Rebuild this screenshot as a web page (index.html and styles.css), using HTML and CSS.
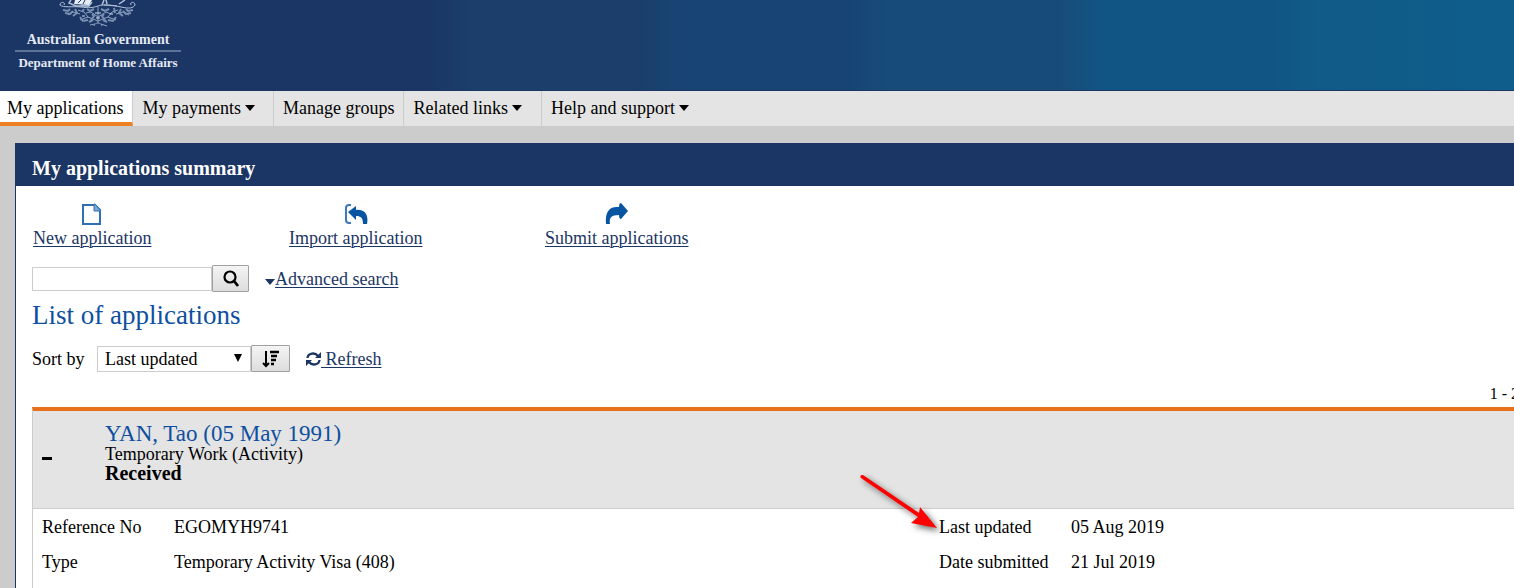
FILE: index.html
```html
<!DOCTYPE html>
<html lang="en">
<head>
<meta charset="utf-8">
<title>My applications summary</title>
<link rel="stylesheet" href="styles.css">
</head>
<body>
<header class="banner">
  <div class="brand">
    <svg class="crest" width="80" height="27" viewBox="0 0 80 27" fill="none" stroke="#b4c3d9" stroke-width="1" aria-hidden="true">
      <path d="M13 0 11 3 18 6H31L34 2M31 0 30 5M46 0 44 5M48 0 49 4M67 0 61 4" stroke-width="1.5"/>
      <path d="M17 0 16 4 31 5 34 0Z" fill="#e6edf5" stroke="none"/>
      <path d="M23 0 20 3M27 0 25 4" stroke="#1b3564"/>
      <path d="M2 5C2 1 8 2 6 5M2 5C5 8 15 6 23 7S34 8 40 6S54 5 63 7S75 8 77 5M77 5C77 1 71 2 73 5M23 5 31 6M46 5 59 6"/>
      <path d="M40 7V23M36 26C37 22 43 22 44 26M32 25 37 24M43 24 49 26M40 21 30 17 22 20M40 21 50 17 58 20M40 17 33 12 28 13M40 17 48 12 53 14M30 17 26 12 20 10M50 17 54 12 60 10M22 14 15 12 10 15M58 14 65 12 71 15" stroke="#8fa3c2"/>
      <path d="M5 10 10 11 12 9M7 13 12 14 15 11M15 16 19 13 17 9M22 17 25 21 30 20M29 9 32 11 36 9M43 9 47 11 51 9M75 10 70 11 68 9M73 13 68 14 65 11M65 16 61 13 63 9M58 17 55 21 50 20M33 20 36 16 34 14M47 20 44 16 46 14M26 9 24 12M56 8 57 13M31 22 35 20M45 20 49 22" stroke="#7890b3" stroke-width="2"/>
      <path d="M37 13H43M38 18H42M52 14H55M24 16H27" stroke="#d4dfec"/>
    </svg>
    <span class="brand-gov">Australian Government</span>
    <span class="brand-dept">Department of Home Affairs</span>
  </div>
</header>

<nav class="menu" aria-label="Main">
  <a class="menu-item menu-item-current" href="#" aria-current="page">My applications</a>
  <a class="menu-item menu-item-payments" href="#">My payments<svg class="caret" viewBox="0 0 10 6"><path d="M0 0H10L5 6Z"/></svg></a>
  <a class="menu-item" href="#">Manage groups</a>
  <a class="menu-item menu-item-links" href="#">Related links<svg class="caret" viewBox="0 0 10 6"><path d="M0 0H10L5 6Z"/></svg></a>
  <a class="menu-item menu-item-last" href="#">Help and support<svg class="caret" viewBox="0 0 10 6"><path d="M0 0H10L5 6Z"/></svg></a>
</nav>

<main class="panel">
  <h1 class="panel-title">My applications summary</h1>
  <div class="panel-body">
    <div class="actions">
      <div class="action-cell"><a class="action" href="#">
        <svg width="22" height="24" viewBox="0 0 22 24" fill="none" stroke="#2f70b3" stroke-width="2"><path d="M2 3H14L19 8V22H2Z"/><path d="M13 2V9H20L14 2Z" fill="#7ba6d1" stroke="#2f70b3" stroke-width="1"/></svg>
        <span class="action-label">New application</span></a></div>
      <div class="action-cell"><a class="action" href="#">
        <svg width="24" height="24" viewBox="0 0 24 24"><path d="M7 3H5Q2 3 2 6V18Q2 21 5 21H7" fill="none" stroke="#3c7ab9" stroke-width="2"/><path d="M4 10 12 4V8C20 7 25 12 23 22H19C19 16 17 14 12 14V18Z" fill="#0754a2"/></svg>
        <span class="action-label">Import application</span></a></div>
      <div class="action-cell"><a class="action" href="#">
        <svg width="24" height="24" viewBox="0 0 24 24"><path d="M23 9 16 1Q14 1 14 5C4 4 0 10 1 22H5C4 16 6 13 14 13Q14 17 16 17Z" fill="#0754a2"/></svg>
        <span class="action-label">Submit applications</span></a></div>
    </div>

    <form class="search">
      <input class="search-box" type="text" aria-label="Search applications">
      <button class="icon-button search-button" type="button" aria-label="Search"><svg width="18" height="18" viewBox="0 0 18 18" fill="none" stroke="#000"><circle cx="8" cy="7" r="5.500" stroke-width="2.200"/><path d="M12 11 16 16" stroke-width="2.800"/></svg></button>
      <a class="advanced" href="#"><svg class="advanced-caret" viewBox="0 0 10 6"><path d="M0 0H10L5 6Z"/></svg><span class="underlined">Advanced search</span></a>
    </form>

    <h2 class="list-title">List of applications</h2>

    <form class="sort">
      <label class="sort-label" for="sort-by">Sort by</label>
      <span class="select-wrap">
        <select class="sort-select" id="sort-by"><option>Last updated</option></select>
        <svg class="select-arrow" viewBox="0 0 8 8"><path d="M0 0H8L4 8Z"/></svg>
      </span>
      <button class="icon-button sort-button" type="button" aria-label="Sort order"><svg width="18" height="18" viewBox="0 0 18 18" fill="none" stroke="#000" stroke-width="2"><path d="M4 1V15M1 13 4 16 7 13"/><path d="M8 2H17M9 6H15M9 10H14M9 14H12" stroke-width="2.400"/></svg></button>
      <a class="refresh" href="#"><svg width="15" height="14" viewBox="0 0 15 14" fill="none" stroke="#1b3564" stroke-width="2.300"><path d="M1.500 6C2 1 9 0 12 4M13.500 8C13 13 6 14 3 10"/><path d="M15 0V6H9ZM0 14V8H6Z" fill="#1b3564" stroke="none"/></svg><span class="underlined">&nbsp;Refresh</span></a>
    </form>

    <div class="count">1 - 2</div>

    <section class="card">
      <div class="card-head">
        <button class="toggle" type="button" aria-label="Collapse"><span class="minus"></span></button>
        <div>
          <h3 class="person">YAN, Tao (05 May 1991)</h3>
          <div class="visa">Temporary Work (Activity)</div>
          <strong class="status">Received</strong>
        </div>
      </div>
      <dl class="details">
        <dt>Reference No</dt><dd>EGOMYH9741</dd>
        <dt class="marked">Last updated<svg class="pointer" width="90" height="64" viewBox="0 0 90 64"><path d="M6 7 63 46 56 52 82 57 65 36 64 42 8 4Q4 4 6 7Z" fill="#f00"/></svg></dt><dd>05 Aug 2019</dd>
        <dt>Type</dt><dd>Temporary Activity Visa (408)</dd>
        <dt>Date submitted</dt><dd>21 Jul 2019</dd>
      </dl>
    </section>
  </div>
</main>
</body>
</html>
```
FILE: styles.css
```css
* { box-sizing: border-box; }
html { overflow: hidden; }
body {
  margin: 0;
  min-height: 100vh;
  display: flex;
  flex-direction: column;
  background: #ccc;
  color: #000;
  font: 18px/20px Georgia, "Liberation Serif", serif;
}
h1, h2, h3, dl, dd { margin: 0; }
button, input, select { font: inherit; color: inherit; }

.banner {
  border-bottom: 1px solid #1b3564;
  padding: 0 15px 19px;
  background: linear-gradient(90deg, #1b3564 28%, #1b3e6a 31%, #1b3e6a 42%, #174474 45%, #174474 56%, #174c7a 59%, #174c7a 70%, #115584 73%, #115584 84%, #115b88 87%, #0e5d8b 100%);
}
.brand { width: 166px; display: flex; flex-direction: column; align-items: center; color: #e4eaf3; font-size: 14px; font-weight: bold; white-space: nowrap; }
.crest { margin-bottom: 4px; }
.brand-gov { line-height: 18px; }
.brand-dept { width: 100%; margin-top: 1px; padding-top: 2px; border-top: 2px solid #5d7297; line-height: 17px; font-size: 13px; text-align: center; }

.menu { display: flex; background: #e4e4e4; }
.menu-item {
  height: 35px;
  padding: 7px 9px 0;
  border-right: 1px solid #ccc;
  color: #000;
  text-decoration: none;
  white-space: nowrap;
}
.menu-item-current { padding-left: 7px; background: #fff; border-bottom: 4px solid #ee8023; }
.menu-item-payments { padding-right: 18px; }
.menu-item-links { padding-right: 19px; }
.menu-item-last { border-right: 0; }
.caret { width: 10px; height: 6px; margin-left: 4px; vertical-align: 3px; }

.panel { flex: 1; margin: 17px 0 0 15px; border-left: 1px solid #1b3564; background: #fff; }
.panel-title { padding: 15px 16px 8px; background: #1b3564; color: #fff; font-size: 20px; line-height: 20px; font-weight: bold; }
.panel-body { padding: 16px 0 0 16px; }

.actions { display: flex; }
.action-cell { width: 256px; }
.action { display: inline-flex; flex-direction: column; align-items: center; padding-left: 1px; color: #1b3564; text-decoration: none; }
.action-label, .underlined { text-decoration: underline; text-underline-offset: 2px; text-decoration-thickness: 1px; }
.action-label { margin-top: 2px; }

.search { display: flex; align-items: center; margin-top: 17px; }
.search-box { width: 180px; height: 24px; border: 1px solid #ccc; padding: 2px 6px; background: #fff; }
.icon-button { display: flex; align-items: center; justify-content: center; height: 27px; padding: 0; border: 1px solid #a0a0a0; border-radius: 1px; background: linear-gradient(#f4f4f4, #ddd); }
.search-button { width: 37px; }
.sort-button { width: 39px; }
.advanced { margin-left: 16px; color: #1b3564; text-decoration: none; }
.advanced-caret { width: 10px; height: 6px; fill: #1b3564; }

.list-title { margin-top: 8px; color: #0e4fa0; font-size: 27px; line-height: 30px; font-weight: normal; }

.sort { display: flex; align-items: center; margin-top: 15px; }
.sort-label { width: 65px; }
.select-wrap { position: relative; display: flex; }
.sort-select { width: 154px; height: 26px; padding: 0 7px; border: 1px solid #ccc; border-radius: 0; background: #fff; appearance: none; }
.select-arrow { position: absolute; right: 9px; top: 8px; width: 8px; height: 8px; pointer-events: none; }
.refresh { margin-left: 16px; color: #1b3564; text-decoration: none; }
.refresh svg { vertical-align: -1px; }

.count { margin: 13px -5px 0 0; text-align: right; font-size: 16px; line-height: 18px; }

.card { margin-top: 4px; border-top: 4px solid #e8701a; border-left: 1px solid #ccc; }
.card-head { display: flex; align-items: center; padding: 12px 0 25px; border-bottom: 1px solid #ccc; background: #e4e4e4; }
.toggle { width: 72px; height: 20px; padding: 11px 0 0 9px; border: 0; background: none; text-align: left; display: flex; align-items: center; }
.minus { width: 10px; height: 3px; background: #000; }
.person { color: #0e4fa0; font-size: 23px; line-height: 22px; font-weight: normal; }
.visa, .status { display: block; line-height: 19px; }
.status { font-size: 20px; }

.details { display: grid; grid-template-columns: 132px 765fr 132px 443fr; row-gap: 15px; padding: 8px 0 16px 9px; white-space: nowrap; }
.marked { position: relative; }
.pointer { position: absolute; right: 100%; top: -46px; margin-right: -6px; filter: drop-shadow(3px 3px 3px rgba(0, 0, 0, 0.6)); }
```
